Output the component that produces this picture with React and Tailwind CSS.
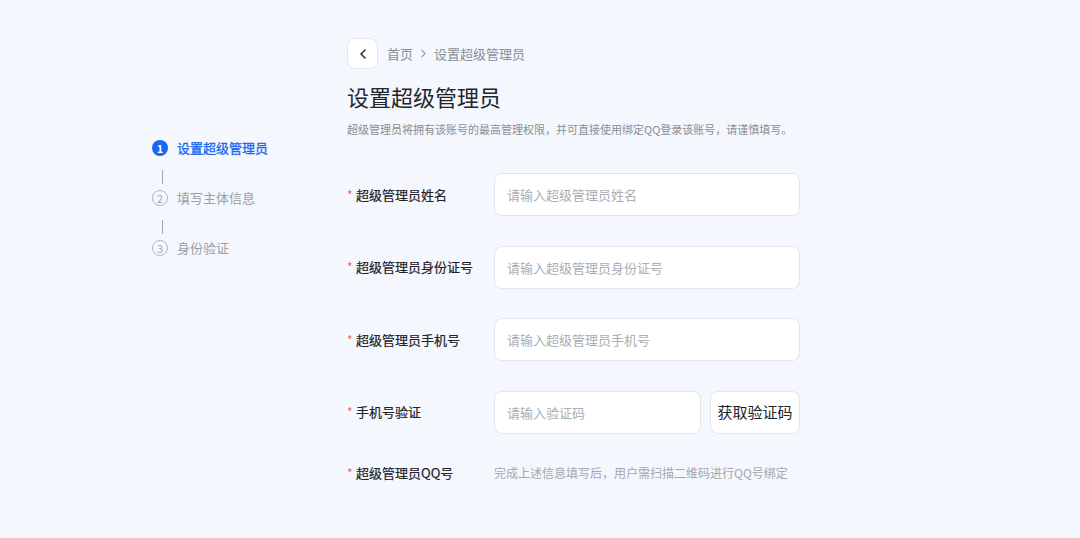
import React from "react";
import { ChevronLeft, ChevronRight } from "lucide-react";

const steps = [
  { n: 1, label: "设置超级管理员", active: true },
  { n: 2, label: "填写主体信息" },
  { n: 3, label: "身份验证" },
];

const fields = [
  { label: "超级管理员姓名", placeholder: "请输入超级管理员姓名" },
  { label: "超级管理员身份证号", placeholder: "请输入超级管理员身份证号" },
  { label: "超级管理员手机号", placeholder: "请输入超级管理员手机号" },
];

function Label({ children }) {
  return (
    <div className="w-[147px] shrink-0 flex items-center text-[13px] text-[#1f2227] [-webkit-text-stroke:0.2px_#1f2227]">
      <span className="w-[9px] text-[#f0646a] text-[12px] [-webkit-text-stroke:0]">*</span>
      <span>{children}</span>
    </div>
  );
}

function TextInput({ placeholder, width = "w-[306px]" }) {
  return (
    <input
      placeholder={placeholder}
      className={`${width} h-[43px] rounded-lg border border-[#e2e5eb] bg-white px-3 text-[13px] outline-none placeholder:text-[#a9adb5]`}
    />
  );
}

export default function App() {
  return (
    <div
      className="min-h-screen w-full bg-[#f4f7fd] flex pl-[152px]"
      style={{ fontFamily: '"Noto Sans CJK SC", "Noto Sans", sans-serif' }}
    >
      <aside className="w-[195px] shrink-0 pt-[140px]">
        {steps.map((s, i) => (
          <div key={s.n}>
            {i > 0 && <div className="ml-[10px] mt-[14px] mb-[6px] h-[14px] w-px bg-[#a3a7ae]" />}
            <div className="flex items-center h-4">
              {s.active ? (
                <span className="w-4 h-4 rounded-full bg-[#1767f2] text-white text-[11px] font-bold flex items-center justify-center leading-none">
                  {s.n}
                </span>
              ) : (
                <span className="w-4 h-4 rounded-full border border-[#b3b6bc] text-[#a3a7ae] text-[11px] flex items-center justify-center leading-none">
                  {s.n}
                </span>
              )}
              <span
                className={`ml-[9px] text-[13px] ${
                  s.active ? "text-[#1767f2] [-webkit-text-stroke:0.3px_#1767f2]" : "text-[#9a9ea6]"
                }`}
              >
                {s.label}
              </span>
            </div>
          </div>
        ))}
      </aside>

      <main className="pt-[38px]">
        <div className="flex items-center">
          <button className="w-[31px] h-[31px] rounded-lg border border-[#e2e5eb] bg-white flex items-center justify-center text-[#333]">
            <ChevronLeft className="w-4 h-4" strokeWidth={2.5} />
          </button>
          <span className="ml-[9px] text-[13px] text-[#8a8e96]">首页</span>
          <ChevronRight className="mx-[4px] w-[13px] h-[13px] text-[#9a9ea6]" strokeWidth={2} />
          <span className="text-[13px] text-[#8a8e96]">设置超级管理员</span>
        </div>

        <h1 className="mt-3 text-[22px] leading-[30px] text-[#23262c]">设置超级管理员</h1>
        <p className="mt-[9px] text-[11px] leading-[18px] text-[#8a8e96]">
          超级管理员将拥有该账号的最高管理权限，并可直接使用绑定QQ登录该账号，请谨慎填写。
        </p>

        <div className="mt-[35px] flex flex-col gap-[29.5px]">
          {fields.map((f) => (
            <div key={f.label} className="flex items-center h-[43px]">
              <Label>{f.label}</Label>
              <TextInput placeholder={f.placeholder} />
            </div>
          ))}
          <div className="flex items-center h-[43px]">
            <Label>手机号验证</Label>
            <TextInput placeholder="请输入验证码" width="w-[207px]" />
            <button className="ml-[9px] w-[90px] h-[43px] rounded-lg border border-[#e2e5eb] bg-white text-[15px] text-[#1f2227]">
              获取验证码
            </button>
          </div>
          <div className="flex items-center h-5">
            <Label>超级管理员QQ号</Label>
            <span className="text-[12px] text-[#a3a7ae]">
              完成上述信息填写后，用户需扫描二维码进行QQ号绑定
            </span>
          </div>
        </div>
      </main>
    </div>
  );
}
